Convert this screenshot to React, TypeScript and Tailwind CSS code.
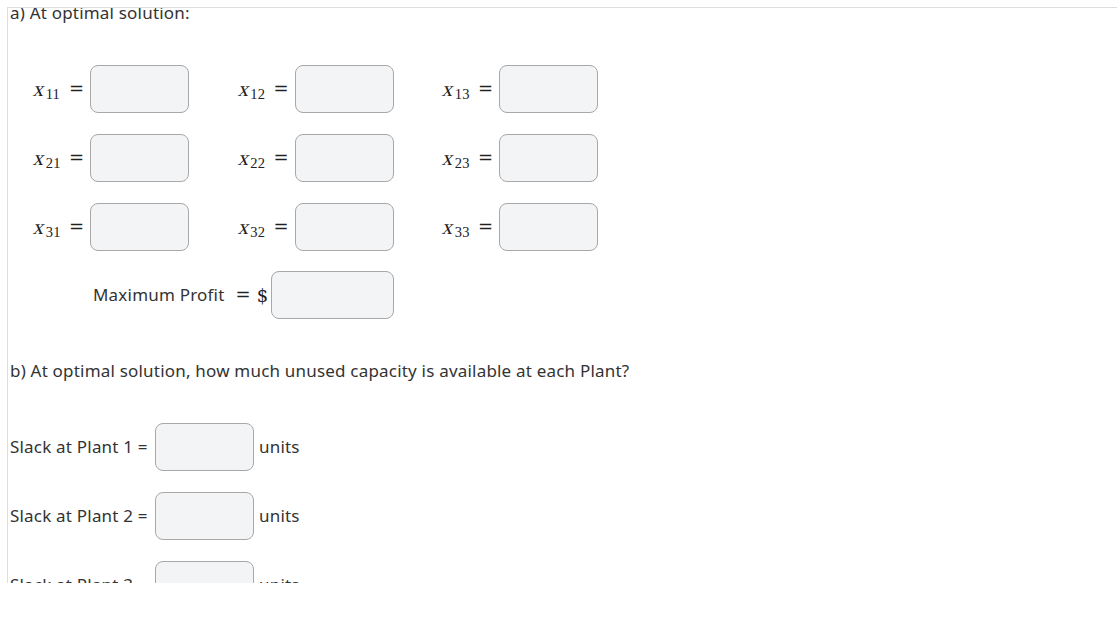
import React from "react";

const sans = { fontFamily: '"Noto Sans", "Open Sans", sans-serif' };
const serif = { fontFamily: '"DejaVu Serif", "Liberation Serif", serif' };
const tnr = { fontFamily: '"Liberation Serif", "DejaVu Serif", serif' };

function MathVar({ sub }: { sub: string }) {
  return (
    <span className="inline-flex items-baseline text-[#222]">
      <span className="inline-block text-[21px] leading-none -skew-x-[14deg]" style={tnr}>
        x
      </span>
      <span className="text-[14.5px] leading-none translate-y-[3px] ml-[1px]" style={tnr}>
        {sub}
      </span>
    </span>
  );
}

function Eq() {
  return (
    <span className="text-[18px] leading-none text-[#222]" style={serif}>
      =
    </span>
  );
}

function Box({ w = "w-[99px]" }: { w?: string }) {
  return <div className={`${w} h-[48px] rounded-[8px] border border-[#a8a8a8] bg-[#f3f4f6] shrink-0`} />;
}

function Cell({ sub }: { sub: string }) {
  return (
    <div className="w-[204.5px] flex items-center">
      <div className="w-[35px] flex">
        <MathVar sub={sub} />
      </div>
      <div className="w-[21px] flex justify-start">
        <Eq />
      </div>
      <Box />
    </div>
  );
}

export default function App() {
  const rows = [
    ["11", "12", "13"],
    ["21", "22", "23"],
    ["31", "32", "33"],
  ];
  return (
    <div className="w-[1117px] h-[629px] bg-white overflow-hidden" style={sans}>
      <div className="ml-[7px] mt-[7px] h-[576px] border-t border-l border-[#dedede] overflow-hidden pl-[2px] text-[#333] text-[17px] tracking-[0.2px]">
        <div className="-mt-[7px] leading-[24px]">a) At optimal solution:</div>
        <div className="mt-[40px] pl-[24px] flex flex-col gap-[21px]">
          {rows.map((r, i) => (
            <div key={i} className="flex">
              {r.map((s) => (
                <Cell key={s} sub={s} />
              ))}
            </div>
          ))}
        </div>
        <div className="mt-[20px] pl-[83px] flex items-center">
          <span className="leading-[24px]">Maximum Profit</span>
          <span className="ml-[11px]">
            <Eq />
          </span>
          <span className="ml-[6px] text-[18px] text-[#222]" style={serif}>
            $
          </span>
          <div className="ml-[3px]">
            <Box w="w-[123px]" />
          </div>
        </div>
        <div className="mt-[40px] leading-[24px]">
          b) At optimal solution, how much unused capacity is available at each Plant?
        </div>
        <div className="mt-[40px] flex flex-col gap-[21px]">
          {[1, 2, 3].map((n) => (
            <div key={n} className="flex items-center">
              <span className="w-[145px] leading-[24px]">Slack at Plant {n} =</span>
              <Box />
              <span className="ml-[5px] leading-[24px]">units</span>
            </div>
          ))}
        </div>
      </div>
    </div>
  );
}
